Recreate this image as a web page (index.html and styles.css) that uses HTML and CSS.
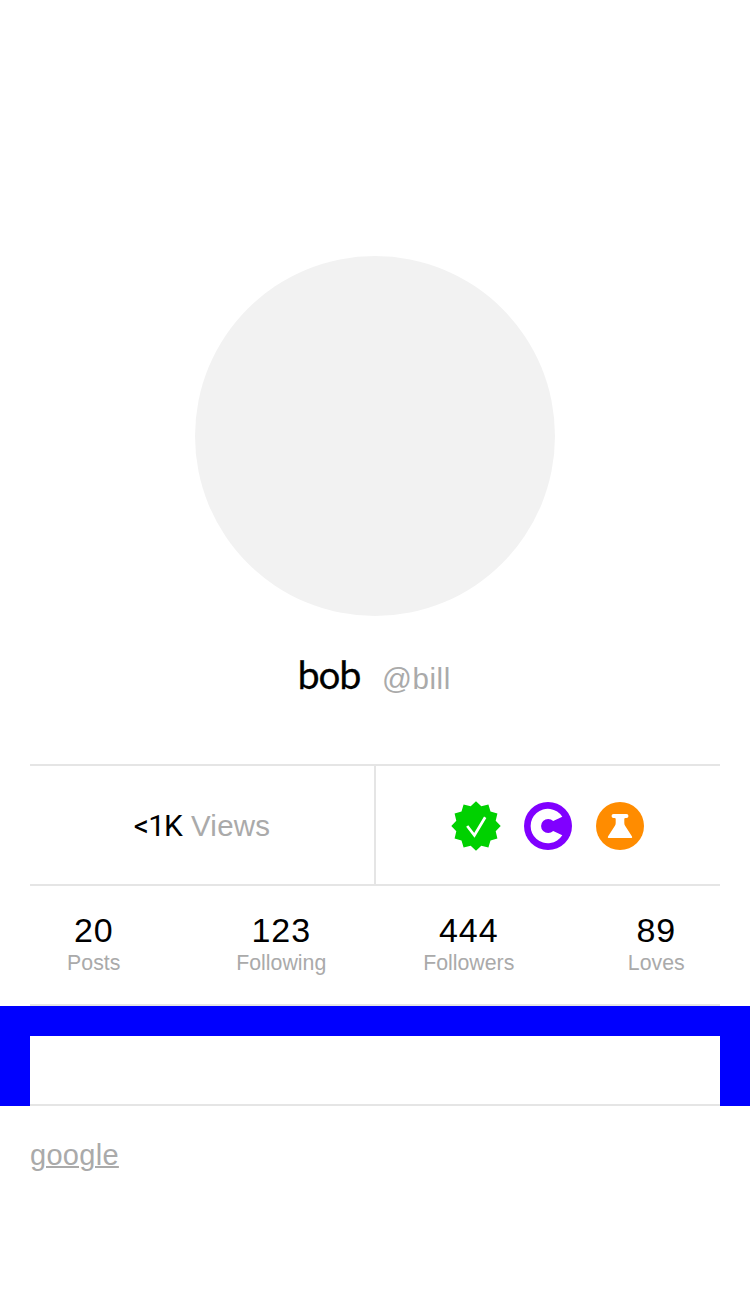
FILE: index.html
```html
<!DOCTYPE html>
<html lang="en">
<head>
<meta charset="utf-8">
<title>bob</title>
<link rel="stylesheet" href="styles.css">
</head>
<body>
<main class="profile">
  <div class="avatar"></div>
  <header class="names"><span class="name">bob</span><span class="handle">@bill</span></header>
  <section class="summary">
    <div class="views"><span class="views-count">&lt;1K</span><span class="views-label">Views</span></div>
    <div class="badges">
      <svg class="badge" viewBox="0 0 50 50"><path fill="#00d100" d="M25 .3L30.300 5.300L37.400 3.600L39.500 10.500L46.400 12.600L44.700 19.700L49.700 25L44.700 30.300L46.400 37.400L39.500 39.500L37.400 46.400L30.300 44.700L25 49.700L19.700 44.700L12.600 46.400L10.500 39.500L3.600 37.400L5.300 30.300L.3 25L5.300 19.700L3.600 12.600L10.500 10.500L12.600 3.600L19.700 5.300Z"/><path fill="none" stroke="#fff" stroke-width="2.700" d="M16.200 25l7.200 9.300L34.200 16.300"/></svg>
      <svg class="badge" viewBox="0 0 50 50"><circle cx="25" cy="25" r="24" fill="#8000ff"/><path fill="#fff" d="M39.300 15.700A17.200 17.200 0 1 0 39.300 34.300L30.200 30A7.100 7.100 0 1 1 30.200 20z"/></svg>
      <svg class="badge" viewBox="0 0 50 50"><circle cx="25" cy="25" r="24" fill="#ff8c00"/><path fill="#fff" d="M18.500 13h13a1.900 1.900 0 0 1 0 3.900H30.500q-1.200 0-1.200 1.200V22q0 1.500.8 2.700L37 35.500q.7 1.500-.8 1.500H13.800q-1.500 0-.8-1.500L19.900 24.700q.8-1.200.8-2.700V18.100q0-1.200-1.200-1.200H18.500a1.900 1.900 0 0 1 0-3.900z"/></svg>
    </div>
  </section>
  <section class="stats">
    <div class="stat-grid">
      <div class="stat"><span class="num">20</span><span class="label">Posts</span></div>
      <div class="stat"><span class="num">123</span><span class="label">Following</span></div>
      <div class="stat"><span class="num">444</span><span class="label">Followers</span></div>
      <div class="stat"><span class="num">89</span><span class="label">Loves</span></div>
    </div>
  </section>
  <section class="bio"><div class="bio-box"></div></section>
  <footer class="links"><a class="link">google</a></footer>
</main>
</body>
</html>
```
FILE: styles.css
```css
* { box-sizing: border-box; }
body { margin: 0; background: #fff; color: #000; font-family: "Liberation Sans", Arial, sans-serif; }
.profile { height: 1306px; overflow: hidden; padding-top: 256px; }
.avatar { width: 360px; height: 360px; margin: 0 auto; border-radius: 50%; background: #f2f2f2; }
.names { height: 148px; padding: 33px 2px 0 0; display: flex; justify-content: center; align-items: baseline; gap: 22px; line-height: 48px; }
.name { font-family: "Noto Sans CJK SC", sans-serif; font-size: 37px; letter-spacing: -1.8px; -webkit-text-stroke: .3px #000; }
.handle { font-size: 29.500px; color: #aaa; letter-spacing: .6px; }
.summary { height: 122px; margin: 0 30px; display: grid; grid-template-columns: 346px 1fr; border-top: 2px solid #e5e5e5; border-bottom: 2px solid #e5e5e5; }
.views { display: flex; justify-content: center; align-items: baseline; gap: 9px; padding-top: 40px; line-height: 40px; border-right: 2px solid #e5e5e5; }
.views-count { font-family: Roboto, sans-serif; font-size: 30px; letter-spacing: -.9px; }
.views-label { font-size: 29.500px; color: #aaa; letter-spacing: .2px; }
.badges { display: flex; justify-content: center; align-items: center; gap: 22px; padding-top: 2px; }
.badge { display: block; width: 50px; height: 50px; }
.stats { height: 120px; margin: 0 30px; border-bottom: 2px solid #e5e5e5; }
.stat-grid { margin: 0 -30px; padding-top: 24px; display: grid; grid-template-columns: repeat(4, 1fr); }
.stat { display: flex; flex-direction: column; align-items: center; }
.num { font-size: 34px; line-height: 40px; letter-spacing: .9px; }
.label { font-size: 21.300px; line-height: 26px; color: #aaa; }
.bio { height: 100px; padding: 30px 30px 0; background: #00f; }
.bio-box { height: 70px; background: #fff; border-bottom: 2px solid #e5e5e5; }
.links { padding: 29px 30px 0; }
.link { font-size: 29px; line-height: 40px; color: #aaa; text-decoration: underline; text-decoration-thickness: 2px; letter-spacing: .3px; }
```
